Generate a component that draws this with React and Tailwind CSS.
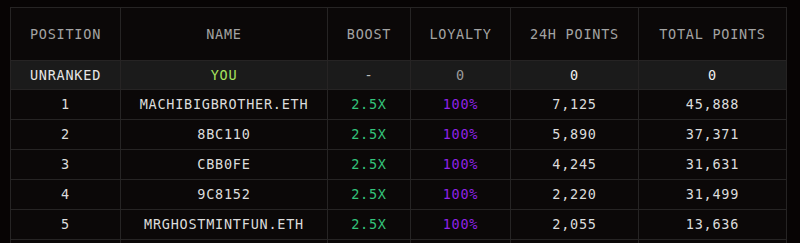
const COLUMNS = [
  { key: 'position', label: 'POSITION', width: 'w-[110px]' },
  { key: 'name', label: 'NAME', width: 'w-[207px]' },
  { key: 'boost', label: 'BOOST', width: 'w-[83px]' },
  { key: 'loyalty', label: 'LOYALTY', width: 'w-[100px]' },
  { key: 'day', label: '24H POINTS', width: 'w-[128px]' },
  { key: 'total', label: 'TOTAL POINTS', width: 'w-[148px]' },
]

const ROWS = [
  { position: 1, name: 'MACHIBIGBROTHER.ETH', day: '7,125', total: '45,888' },
  { position: 2, name: '8BC110', day: '5,890', total: '37,371' },
  { position: 3, name: 'CBB0FE', day: '4,245', total: '31,631' },
  { position: 4, name: '9C8152', day: '2,220', total: '31,499' },
  { position: 5, name: 'MRGHOSTMINTFUN.ETH', day: '2,055', total: '13,636' },
]

const cell = 'border border-[#262424] text-center align-middle p-0'

export default function App() {
  return (
    <div className="h-[243px] overflow-hidden bg-[#070404] pl-[10px] pt-[7px] font-['DejaVu_Sans_Mono',monospace] text-[13.5px] tracking-[0.75px]">
      <table className="w-[777px] table-fixed border-collapse bg-[#0b0808]">
        <thead>
          <tr className="h-[53px]">
            {COLUMNS.map((c) => (
              <th key={c.key} className={`${cell} ${c.width} font-normal text-[#a3a3a3]`}>
                {c.label}
              </th>
            ))}
          </tr>
        </thead>
        <tbody>
          <tr className="h-[29px] bg-[#1b1b1b]">
            <td className={`${cell} text-[#e6e6e6]`}>UNRANKED</td>
            <td className={`${cell} text-[#a6e35f]`}>YOU</td>
            <td className={`${cell} text-[#bdbdbd]`}>-</td>
            <td className={`${cell} text-[#9a9a9a]`}>0</td>
            <td className={`${cell} text-[#f0f0f0]`}>0</td>
            <td className={`${cell} text-[#f0f0f0]`}>0</td>
          </tr>
          {ROWS.map((r) => (
            <tr key={r.position} className="h-[30px]">
              <td className={`${cell} text-[#dcdcdc]`}>{r.position}</td>
              <td className={`${cell} text-[#dcdcdc]`}>{r.name}</td>
              <td className={`${cell} text-[#33c27a]`}>2.5X</td>
              <td className={`${cell} text-[#8f22e6]`}>100%</td>
              <td className={`${cell} text-[#dcdcdc]`}>{r.day}</td>
              <td className={`${cell} text-[#dcdcdc]`}>{r.total}</td>
            </tr>
          ))}
          <tr className="h-[30px]">
            {COLUMNS.map((c) => (
              <td key={c.key} className={cell} />
            ))}
          </tr>
        </tbody>
      </table>
    </div>
  )
}
